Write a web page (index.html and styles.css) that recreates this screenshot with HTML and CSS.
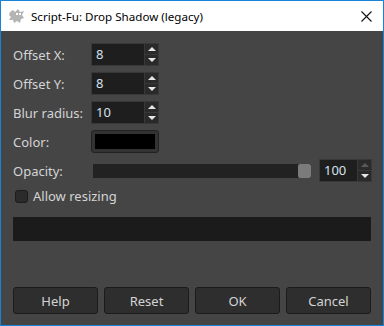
FILE: index.html
```html
<!DOCTYPE html>
<html lang="en">
<head>
  <meta charset="UTF-8" />
  <title>Script-Fu: Drop Shadow (legacy)</title>
  <link rel="stylesheet" href="styles.css">
</head>
<body>
  <div class="window">
    <div class="titlebar">
      <svg class="app-icon" width="18" height="16" viewBox="0 0 18 16">
        <path d="M2 4 L5 2 L7 4 L10 1 L12 4 L16 3 L14 7 L16 10 L13 11 L12 15 L9 13 L6 15 L5 12 L1 12 L3 9 L1 7 Z" fill="#b4b4b4"/>
        <rect x="8" y="5" width="2" height="2" fill="#fff"/>
        <rect x="11" y="5" width="2" height="2" fill="#fff"/>
      </svg>
      <span class="title">Script-Fu: Drop Shadow (legacy)</span>
      <svg class="close" width="11" height="11" viewBox="0 0 11 11">
        <path d="M0.5 0.5 L10.5 10.5 M10.5 0.5 L0.5 10.5" stroke="#111" stroke-width="1.1"/>
      </svg>
    </div>
    <div class="content">
      <div class="form">
        <label>Offset X:</label>
        <div class="spin"><span class="spin-value focused">8</span><div class="spin-btns"><span class="up"></span><span class="down"></span></div></div>
        <label>Offset Y:</label>
        <div class="spin"><span class="spin-value">8</span><div class="spin-btns"><span class="up"></span><span class="down"></span></div></div>
        <label>Blur radius:</label>
        <div class="spin"><span class="spin-value">10</span><div class="spin-btns"><span class="up"></span><span class="down"></span></div></div>
        <label>Color:</label>
        <div class="color-btn"><span class="swatch"></span></div>
        <label>Opacity:</label>
        <div class="opacity">
          <div class="trough"><span class="handle"></span></div>
          <div class="spin small"><span class="spin-value">100</span><div class="spin-btns"><span class="up disabled"></span><span class="down"></span></div></div>
        </div>
      </div>
      <div class="check-row">
        <span class="checkbox"></span>
        <span>Allow resizing</span>
      </div>
      <div class="progress"></div>
      <div class="buttons">
        <button>Help</button>
        <button>Reset</button>
        <button>OK</button>
        <button>Cancel</button>
      </div>
    </div>
  </div>
</body>
</html>
```

FILE: styles.css
```css
body {
  margin: 0;
  font-family: "Noto Sans", "Open Sans", sans-serif;
}
.window {
  width: 384px;
  height: 326px;
  box-sizing: border-box;
  border: 1px solid #1883d7;
  background: #454545;
  display: flex;
  flex-direction: column;
}
.titlebar {
  height: 30px;
  background: #fff;
  display: flex;
  align-items: center;
  padding-left: 7px;
  font-size: 11.6px;
  color: #000;
}
.app-icon {
  margin-right: 5px;
}
.title {
  flex: 1;
}
.close {
  margin-right: 11px;
}
.content {
  flex: 1;
  display: flex;
  flex-direction: column;
  padding: 12px 12px 11px 12px;
  color: #d4d4d4;
  font-size: 13px;
}
.form {
  display: grid;
  grid-template-columns: 78px 1fr;
  grid-auto-rows: 23px;
  row-gap: 6px;
  align-items: center;
}
.spin {
  width: 68px;
  height: 23px;
  box-sizing: border-box;
  background: #383838;
  padding: 1px;
  display: flex;
}
.spin-value {
  flex: 1;
  background: #1e1e1e;
  color: #d6e2ee;
  padding-left: 4px;
  line-height: 21px;
  font-size: 13px;
}
.spin-btns {
  width: 13px;
  display: flex;
  flex-direction: column;
  gap: 1px;
  margin-left: 1px;
}
.spin-btns span {
  flex: 1;
  background: #2a2a2a;
  position: relative;
}
.spin-btns span::after {
  content: "";
  position: absolute;
  left: 3px;
  top: 3px;
  border-left: 4px solid transparent;
  border-right: 4px solid transparent;
}
.spin-btns .up::after {
  border-bottom: 4px solid #e6e6e6;
}
.spin-btns .down::after {
  border-top: 4px solid #e6e6e6;
}
.spin-btns .up.disabled::after {
  border-bottom-color: #5a5a5a;
}
.color-btn {
  width: 68px;
  height: 23px;
  box-sizing: border-box;
  border: 1px solid #222;
  border-radius: 3px;
  background: #333;
  padding: 3px;
}
.swatch {
  display: block;
  height: 100%;
  background: #000;
}
.opacity {
  display: flex;
  align-items: center;
  margin-left: 2px;
}
.trough {
  width: 218px;
  height: 14px;
  background: #222;
  display: flex;
  justify-content: flex-end;
}
.handle {
  width: 13px;
  height: 14px;
  border-radius: 2px;
  background: #7b7b7b;
}
.spin.small {
  width: 53px;
  margin-left: 8px;
}
.check-row {
  display: flex;
  align-items: center;
  gap: 5px;
  margin-top: 6px;
  margin-left: 2px;
  height: 16px;
}
.checkbox {
  width: 13px;
  height: 13px;
  border-radius: 3px;
  background: #2b2b2b;
  border: 1px solid #1c1c1c;
  box-sizing: border-box;
}
.progress {
  margin-top: 13px;
  height: 24px;
  background: #1b1b1b;
}
.buttons {
  margin-top: auto;
  display: grid;
  grid-template-columns: repeat(4, 1fr);
  gap: 6px;
}
.buttons button {
  height: 27px;
  background: #2e2e2e;
  border: 1px solid #1b1b1b;
  border-radius: 3px;
  color: #d4d4d4;
  font-family: "Noto Sans", "Open Sans", sans-serif;
  font-size: 13px;
}
```
